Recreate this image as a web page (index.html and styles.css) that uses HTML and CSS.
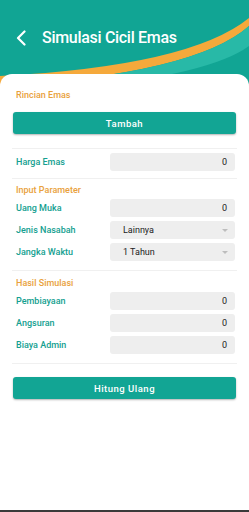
FILE: index.html
```html
<!DOCTYPE html>
<html lang="id">
<head>
    <meta charset="UTF-8">
    <meta name="viewport" content="width=device-width, initial-scale=1.0">
    <title>Simulasi Cicil Emas</title>
    <link rel="stylesheet" href="styles.css">
</head>
<body>
    <header class="app-bar">
        <!-- decorative swoosh behind the title -->
        <svg class="swoosh" width="249" height="100" viewBox="0 0 249 100">
            <path d="M0 76 Q190 66 249 18 L249 26 Q195 74 0 86 Z" fill="#f5a93b"/>
            <path d="M0 86 Q195 74 249 26 L249 46 Q200 82 0 94 Z" fill="#28b9a7"/>
        </svg>
        <div class="bar-row">
            <svg class="back" width="10" height="16" viewBox="0 0 10 16">
                <path d="M8.5 1.5 L2 8 L8.5 14.5" fill="none" stroke="#fff" stroke-width="2.2" stroke-linecap="round" stroke-linejoin="round"/>
            </svg>
            <h1 class="title">Simulasi Cicil Emas</h1>
        </div>
    </header>

    <main class="card">
        <section class="group g-rincian">
            <h2 class="group-title">Rincian Emas</h2>
            <button class="btn">Tambah</button>
        </section>

        <section class="group g-harga">
            <div class="row">
                <span class="label">Harga Emas</span>
                <span class="field num">0</span>
            </div>
        </section>

        <section class="group g-input">
            <h2 class="group-title">Input Parameter</h2>
            <div class="row">
                <span class="label">Uang Muka</span>
                <span class="field num">0</span>
            </div>
            <div class="row">
                <span class="label">Jenis Nasabah</span>
                <span class="field select">Lainnya<i class="caret"></i></span>
            </div>
            <div class="row">
                <span class="label">Jangka Waktu</span>
                <span class="field select">1 Tahun<i class="caret"></i></span>
            </div>
        </section>

        <section class="group g-hasil">
            <h2 class="group-title">Hasil Simulasi</h2>
            <div class="row">
                <span class="label">Pembiayaan</span>
                <span class="field num">0</span>
            </div>
            <div class="row">
                <span class="label">Angsuran</span>
                <span class="field num">0</span>
            </div>
            <div class="row">
                <span class="label">Biaya Admin</span>
                <span class="field num">0</span>
            </div>
        </section>

        <section class="group g-action">
            <button class="btn">Hitung Ulang</button>
        </section>
    </main>

    <div class="nav-edge"></div>
</body>
</html>
```

FILE: styles.css
```css
* {
    margin: 0;
    padding: 0;
    box-sizing: border-box;
}

body {
    font-family: 'Roboto', 'Noto Sans', sans-serif;
    background: #ffffff;
    color: #333333;
    min-height: 100vh;
    display: flex;
    flex-direction: column;
    overflow: hidden;
}

/* Header */
.app-bar {
    position: relative;
    height: 88px;
    background: #11a594;
    overflow: hidden;
}

.swoosh {
    position: absolute;
    top: 0;
    left: 0;
}

.bar-row {
    position: relative;
    display: flex;
    align-items: center;
    gap: 16px;
    padding: 29px 0 0 16px;
}

.back {
    display: block;
}

.title {
    font-size: 16px;
    font-weight: 500;
    color: #ffffff;
    letter-spacing: -0.3px;
    line-height: 18px;
}

/* White card */
.card {
    position: relative;
    flex: 1;
    margin-top: -14px;
    background: #ffffff;
    border-radius: 12px 12px 0 0;
    padding: 12px 12px 0 12px;
}

.group {
    border-bottom: 1px solid #f0f0f0;
    display: flex;
    flex-direction: column;
    gap: 4px;
}

.g-rincian { padding: 4px 0 14px; gap: 12px; }
.g-harga { padding: 4px 0 7px; }
.g-input { padding: 6px 0 9px; }
.g-hasil { padding: 7px 0 9px; }
.g-action { padding-top: 13px; border-bottom: none; }

.group-title {
    font-size: 9px;
    font-weight: 500;
    color: #e9a13c;
    padding-left: 4px;
    line-height: 10px;
}

.row {
    display: flex;
    align-items: center;
    justify-content: space-between;
    height: 18px;
    padding-left: 4px;
    margin-right: 2px;
}

.label {
    font-size: 9px;
    font-weight: 500;
    color: #14a090;
}

.field {
    position: relative;
    width: 125px;
    height: 18px;
    background: #eeeeee;
    border-radius: 3px;
    font-size: 9px;
    color: #222222;
    display: flex;
    align-items: center;
}

.field.num {
    justify-content: flex-end;
    padding-right: 8px;
}

.field.select {
    padding-left: 13px;
}

.caret {
    position: absolute;
    right: 7px;
    top: 8px;
    border-left: 3px solid transparent;
    border-right: 3px solid transparent;
    border-top: 3px solid #bdbdbd;
}

.btn {
    display: block;
    width: 223px;
    height: 22px;
    margin-left: 1px;
    background: #12a594;
    color: #ffffff;
    border: none;
    border-radius: 3px;
    font-family: inherit;
    font-size: 9.5px;
    font-weight: 500;
    letter-spacing: 0.5px;
    box-shadow: 0 1px 2px rgba(0, 0, 0, 0.3);
}

.nav-edge {
    height: 2px;
    background: #3a3a3a;
}
```
